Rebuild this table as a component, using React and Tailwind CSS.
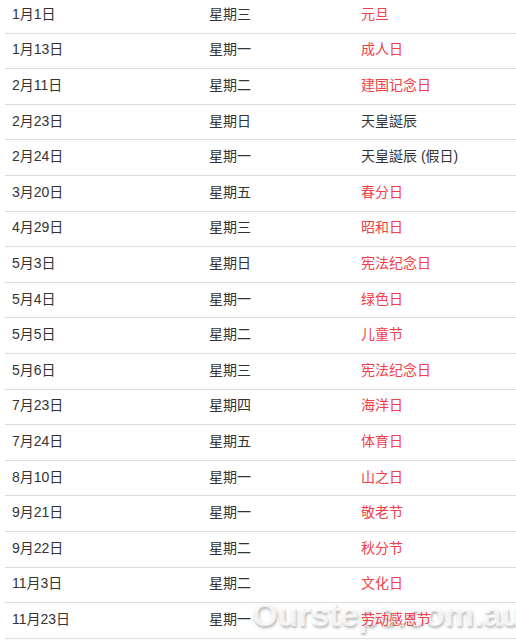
const ROWS = [
  ["1月1日", "星期三", "元旦", true],
  ["1月13日", "星期一", "成人日", true],
  ["2月11日", "星期二", "建国记念日", true],
  ["2月23日", "星期日", "天皇誕辰", false],
  ["2月24日", "星期一", "天皇誕辰 (假日)", false],
  ["3月20日", "星期五", "春分日", true],
  ["4月29日", "星期三", "昭和日", true],
  ["5月3日", "星期日", "宪法纪念日", true],
  ["5月4日", "星期一", "绿色日", true],
  ["5月5日", "星期二", "儿童节", true],
  ["5月6日", "星期三", "宪法纪念日", true],
  ["7月23日", "星期四", "海洋日", true],
  ["7月24日", "星期五", "体育日", true],
  ["8月10日", "星期一", "山之日", true],
  ["9月21日", "星期一", "敬老节", true],
  ["9月22日", "星期二", "秋分节", true],
  ["11月3日", "星期二", "文化日", true],
  ["11月23日", "星期一", "劳动感恩节", true],
];

export default function App() {
  return (
    <div className="relative w-[516px] h-[640px] overflow-hidden bg-white font-['Liberation_Sans','Noto_Sans_CJK_SC',sans-serif] text-[14px] text-[#333]">
      {/* Watermark sits under the table text */}
      <div className="absolute left-[252px] top-[590px] whitespace-nowrap font-['Liberation_Sans',sans-serif] text-[33px] font-bold text-white/80 [text-shadow:1px_2px_3px_rgba(0,0,0,0.3)] pointer-events-none">
        Oursteps.com.au
      </div>

      <div className="relative ml-[5px] -mt-[2px]">
        {ROWS.map(([date, day, name, red]) => (
          <div
            key={date}
            className="grid grid-cols-[198px_152px_1fr] items-center h-[35.6px] border-b border-[#dcdcdc] pb-[2px]"
          >
            <span className="pl-[7px]">{date}</span>
            <span className="pl-[6px]">{day}</span>
            <span className={red ? "pl-[6px] text-[#f2404a]" : "pl-[6px]"}>{name}</span>
          </div>
        ))}
      </div>
    </div>
  );
}
